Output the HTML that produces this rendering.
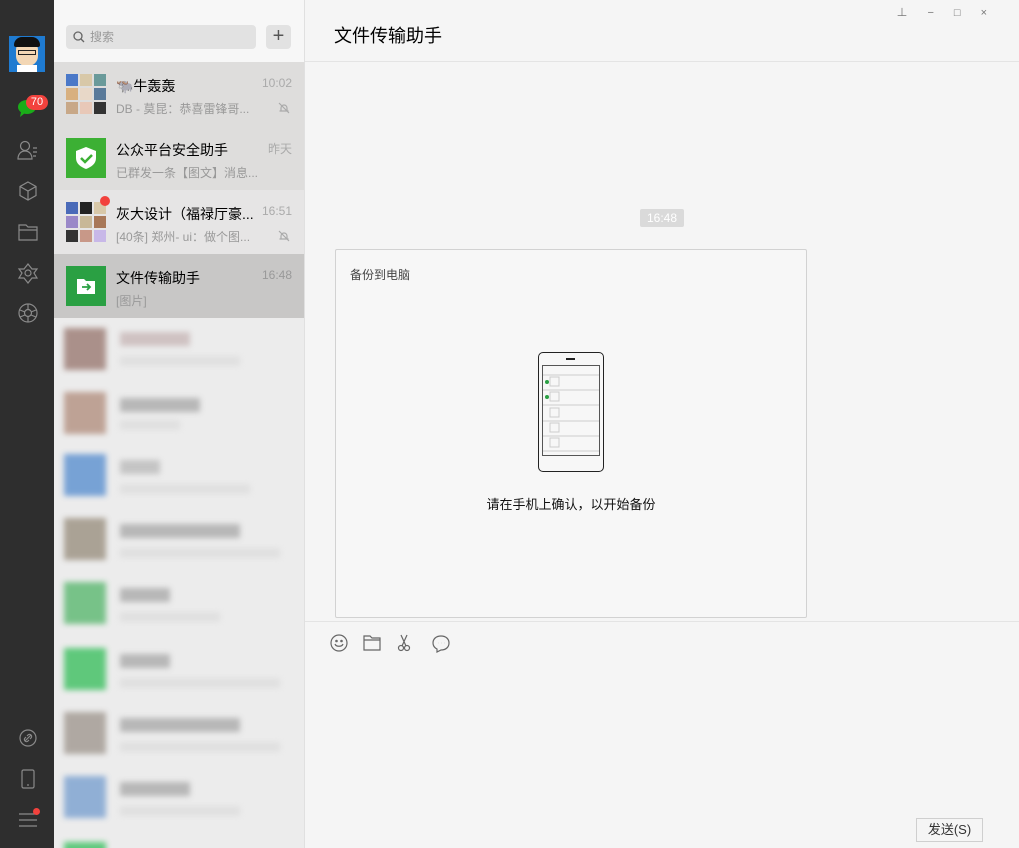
<!DOCTYPE html>
<html><head><meta charset="utf-8"><style>
*{margin:0;padding:0;box-sizing:border-box}
body{width:1019px;height:848px;overflow:hidden;font-family:"Liberation Sans","Noto Sans CJK SC",sans-serif;background:#f5f5f5;position:relative}
.side{position:absolute;left:0;top:0;width:54px;height:848px;background:#2e2e2e}
.list{position:absolute;left:54px;top:0;width:250px;height:848px;background:#e9e8e8;overflow:hidden}
.top{height:62px;background:#f7f7f7;position:relative}
.search{position:absolute;left:12px;top:25px;width:190px;height:24px;background:#e2e2e2;border-radius:4px;font-size:12px;color:#999;padding-left:24px;line-height:24px}
.plus{position:absolute;left:212px;top:25px;width:25px;height:24px;background:#e2e2e2;border-radius:4px;font-size:20px;color:#555;text-align:center;line-height:22px}
.item{height:64px;position:relative}
.av{position:absolute;left:12px;top:12px;width:40px;height:40px}
.grid{display:grid;grid-template-columns:repeat(3,12px);grid-gap:2px}
.grid div{width:12px;height:12px}
.nm{position:absolute;left:62px;top:14px;font-size:14px;color:#000;white-space:nowrap}
.ms{position:absolute;left:62px;top:38px;font-size:12px;color:#999;white-space:nowrap}
.tm{position:absolute;right:12px;top:14px;font-size:12px;color:#aaa}
.mute{position:absolute;right:14px;top:40px}
.blur{position:absolute;filter:blur(3px);opacity:.8}
.main{position:absolute;left:304px;top:0;width:715px;height:848px;background:#f5f5f5;border-left:1px solid #e0e0e0}
.icon{position:absolute;left:17px}
</style></head><body>
<div class="side">
 <div style="position:absolute;left:9px;top:36px;width:36px;height:36px;background:#1f7bd1;overflow:hidden">
  <div style="position:absolute;left:7px;top:4px;width:22px;height:26px;background:#f3d7b5;border-radius:10px"></div>
  <div style="position:absolute;left:5px;top:1px;width:26px;height:10px;background:#111;border-radius:8px 8px 2px 2px"></div>
  <div style="position:absolute;left:9px;top:14px;width:18px;height:5px;border:1px solid #222"></div>
  <div style="position:absolute;left:8px;top:29px;width:20px;height:8px;background:#fff"></div>
 </div>
 <svg class="icon" style="top:98px" width="22" height="20"><ellipse cx="10" cy="9" rx="9" ry="7" fill="#1aad19"/><path d="M4 14 L3 19 L8 15Z" fill="#1aad19"/></svg>
 <div style="position:absolute;left:26px;top:95px;width:22px;height:15px;background:#f2423d;border-radius:8px;color:#fff;font-size:11px;text-align:center;line-height:15px">70</div>
 <svg class="icon" style="top:140px" width="22" height="20" fill="none" stroke="#8a8a8a" stroke-width="1.2"><circle cx="8" cy="6" r="4.5"/><path d="M1 19c0-5 3-8 7-8s7 3 7 8z"/><path d="M16 8h4M16 12h4M16 16h3"/></svg>
 <svg class="icon" style="top:180px" width="22" height="22" fill="none" stroke="#8a8a8a" stroke-width="1.2"><path d="M11 2l8 4.5v9L11 20l-8-4.5v-9z M3 6.5l8 4.5 8-4.5 M11 11v9"/></svg>
 <svg class="icon" style="top:222px" width="22" height="20" fill="none" stroke="#8a8a8a" stroke-width="1.2"><path d="M2 3h7l2 2h9v13H2z M2 8h18"/></svg>
 <svg class="icon" style="top:262px" width="22" height="22" fill="none" stroke="#8a8a8a" stroke-width="1.2"><path d="M11 2l4 5h5l-3 4 3 5h-5l-4 5-4-5H2l3-5-3-4h5z"/><circle cx="11" cy="11" r="3"/></svg>
 <svg class="icon" style="top:302px" width="22" height="22" fill="none" stroke="#8a8a8a" stroke-width="1.2"><circle cx="11" cy="11" r="9"/><circle cx="11" cy="11" r="3.5"/><path d="M11 2v6M3 8l5 2M3 15l5-2M11 20v-6M19 15l-5-2M19 8l-5 2"/></svg>
 <svg class="icon" style="top:727px" width="22" height="22" fill="none" stroke="#8a8a8a" stroke-width="1.2"><circle cx="11" cy="11" r="8"/><path d="M8 14l6-6M9 10l-1 1a2 2 0 003 3l1-1M13 12l1-1a2 2 0 00-3-3l-1 1"/></svg>
 <svg class="icon" style="top:768px" width="22" height="22" fill="none" stroke="#8a8a8a" stroke-width="1.2"><rect x="5" y="2" width="12" height="18" rx="1.5"/><path d="M10 17h2"/></svg>
 <svg class="icon" style="top:810px" width="22" height="20" fill="none" stroke="#8a8a8a" stroke-width="1.3"><path d="M2 4h16M2 10h18M2 16h18"/></svg>
 <div style="position:absolute;left:33px;top:808px;width:7px;height:7px;border-radius:50%;background:#f2423d"></div>
</div>
<div class="list">
 <div class="top"><div class="search"><svg style="position:absolute;left:7px;top:6px" width="12" height="12" fill="none" stroke="#666" stroke-width="1.3"><circle cx="5" cy="5" r="4"/><path d="M8 8l3 3"/></svg>搜索</div><div class="plus">+</div></div>
 <div class="item" style="background:#dedddc"><div class="av grid"><div style="background:#4a78c8"></div><div style="background:#d8c8a8"></div><div style="background:#6a9a9a"></div><div style="background:#d8b080"></div><div style="background:#e8d8c8"></div><div style="background:#5a7a9a"></div><div style="background:#c8a888"></div><div style="background:#e8c8b8"></div><div style="background:#333"></div></div><div class="nm">🐃牛轰轰</div><div class="ms">DB - 莫昆：恭喜雷锋哥...</div><div class="tm">10:02</div><svg class="mute" width="12" height="12" fill="none" stroke="#aaa" stroke-width="1.2"><path d="M3 9V6a3 3 0 016 0v3h1.5H1.5z M1 1l10 10"/></svg></div>
 <div class="item" style="background:#dedddc"><div class="av" style="background:#3cb034"><svg width="40" height="40"><path d="M20 9l10 4v7c0 6-5 9-10 11-5-2-10-5-10-11v-7z" fill="#fff"/><path d="M15 20l4 4 7-7" stroke="#3cb034" stroke-width="2.5" fill="none"/></svg></div><div class="nm">公众平台安全助手</div><div class="ms">已群发一条【图文】消息...</div><div class="tm">昨天</div></div>
 <div class="item" style="background:#e6e5e5"><div class="av grid"><div style="background:#4a6ab8"></div><div style="background:#222"></div><div style="background:#d8c8a8"></div><div style="background:#9a88c8"></div><div style="background:#c8b898"></div><div style="background:#a87858"></div><div style="background:#333"></div><div style="background:#c89888"></div><div style="background:#c8b8e8"></div></div><div style="position:absolute;left:46px;top:6px;width:10px;height:10px;border-radius:50%;background:#f2423d"></div><div class="nm">灰大设计（福禄厅豪...</div><div class="ms">[40条] 郑州- ui：做个图...</div><div class="tm">16:51</div><svg class="mute" width="12" height="12" fill="none" stroke="#aaa" stroke-width="1.2"><path d="M3 9V6a3 3 0 016 0v3h1.5H1.5z M1 1l10 10"/></svg></div>
 <div class="item" style="background:#c8c7c6"><div class="av" style="background:#2aa043"><svg width="40" height="40"><path d="M11 13h7l2 2h9v13H11z" fill="#fff"/><path d="M16 21h7M21 18l3 3-3 3" stroke="#2aa043" stroke-width="1.8" fill="none"/></svg></div><div class="nm">文件传输助手</div><div class="ms">[图片]</div><div class="tm" style="color:#999">16:48</div></div>
 <div style="position:relative;height:530px;background:#ececec">
  <div class="blur" style="left:10px;top:10px;width:42px;height:42px;background:#9a7a72"></div><div class="blur" style="left:66px;top:14px;width:70px;height:14px;background:#c8b8b8"></div><div class="blur" style="left:66px;top:38px;width:120px;height:10px;background:#ddd"></div>
  <div class="blur" style="left:10px;top:74px;width:42px;height:42px;background:#b39080"></div><div class="blur" style="left:66px;top:80px;width:80px;height:14px;background:#aaa"></div><div class="blur" style="left:66px;top:102px;width:60px;height:10px;background:#ddd"></div>
  <div class="blur" style="left:10px;top:136px;width:42px;height:42px;background:#5a90d0"></div><div class="blur" style="left:66px;top:142px;width:40px;height:14px;background:#bbb"></div><div class="blur" style="left:66px;top:166px;width:130px;height:10px;background:#ddd"></div>
  <div class="blur" style="left:10px;top:200px;width:42px;height:42px;background:#9a9080"></div><div class="blur" style="left:66px;top:206px;width:120px;height:14px;background:#aaa"></div><div class="blur" style="left:66px;top:230px;width:160px;height:10px;background:#ddd"></div>
  <div class="blur" style="left:10px;top:264px;width:42px;height:42px;background:#5bb870"></div><div class="blur" style="left:66px;top:270px;width:50px;height:14px;background:#aaa"></div><div class="blur" style="left:66px;top:294px;width:100px;height:10px;background:#ddd"></div>
  <div class="blur" style="left:10px;top:330px;width:42px;height:42px;background:#3cc060"></div><div class="blur" style="left:66px;top:336px;width:50px;height:14px;background:#aaa"></div><div class="blur" style="left:66px;top:360px;width:160px;height:10px;background:#ddd"></div>
  <div class="blur" style="left:10px;top:394px;width:42px;height:42px;background:#a09890"></div><div class="blur" style="left:66px;top:400px;width:120px;height:14px;background:#aaa"></div><div class="blur" style="left:66px;top:424px;width:160px;height:10px;background:#ddd"></div>
  <div class="blur" style="left:10px;top:458px;width:42px;height:42px;background:#7aa0d0"></div><div class="blur" style="left:66px;top:464px;width:70px;height:14px;background:#aaa"></div><div class="blur" style="left:66px;top:488px;width:120px;height:10px;background:#ddd"></div>
  <div class="blur" style="left:10px;top:524px;width:42px;height:20px;background:#3cc060"></div>
 </div>
</div>
<div class="main">
 <div style="position:absolute;left:29px;top:22px;font-size:18px;color:#000">文件传输助手</div>
 <div style="position:absolute;right:12px;top:4px;font-size:11px;color:#777;letter-spacing:20px">⊥−□×</div>
 <div style="position:absolute;left:0;top:61px;width:715px;height:1px;background:#e4e4e4"></div>
 <div style="position:absolute;left:335px;top:209px;width:44px;height:18px;background:#dadada;border-radius:2px;color:#fff;font-size:12px;text-align:center;line-height:18px">16:48</div>
 <div style="position:absolute;left:30px;top:249px;width:472px;height:369px;background:#f7f7f7;border:1px solid #d2d2d2;border-radius:2px">
  <div style="position:absolute;left:14px;top:16px;font-size:12px;color:#444">备份到电脑</div>
  <div style="position:absolute;left:202px;top:102px;width:66px;height:120px;border:1.3px solid #222;border-radius:5px">
   <div style="position:absolute;left:27px;top:5px;width:9px;height:1.5px;background:#222"></div>
   <div style="position:absolute;left:3px;top:12px;width:58px;height:91px;border:1px solid #555">
    <svg width="56" height="89"><g stroke="#ccc" fill="none"><path d="M0 9h56M0 24h56M0 39h56M0 55h56M0 70h56M0 85h56"/><rect x="7" y="11" width="9" height="9"/><rect x="7" y="26" width="9" height="9"/><rect x="7" y="42" width="9" height="9"/><rect x="7" y="57" width="9" height="9"/><rect x="7" y="72" width="9" height="9"/></g><circle cx="4" cy="16" r="2" fill="#2aa043"/><circle cx="4" cy="31" r="2" fill="#2aa043"/></svg>
   </div>
  </div>
  <div style="position:absolute;left:0;width:470px;top:244px;text-align:center;font-size:13px;color:#111">请在手机上确认，以开始备份</div>
 </div>
 <div style="position:absolute;left:0;top:621px;width:715px;height:1px;background:#e4e4e4"></div>
 <svg style="position:absolute;left:25px;top:633px" width="130" height="20" fill="none" stroke="#666" stroke-width="1.2"><circle cx="9" cy="10" r="8"/><path d="M5 11c1 3 7 3 8 0"/><circle cx="6.5" cy="8" r=".7"/><circle cx="11.5" cy="8" r=".7"/><path d="M34 3h6l2 2h8v12H34z M34 7h16"/><circle cx="71" cy="15" r="2.5"/><circle cx="77" cy="15" r="2.5"/><path d="M72 13l5-11M76 13l-5-11"/><path d="M111 3c5 0 8 3 8 7s-3 7-8 7l-4 2v-3c-2-1-4-3-4-6 0-4 3-7 8-7z"/><path d="M108 10h.1M111 10h.1M114 10h.1" stroke-width="1.6"/></svg>
 <div style="position:absolute;left:611px;top:818px;width:67px;height:24px;border:1px solid #cfcfcf;background:#f5f5f5;font-size:13px;color:#333;text-align:center;line-height:22px">发送(S)</div>
</div>
</body></html>
